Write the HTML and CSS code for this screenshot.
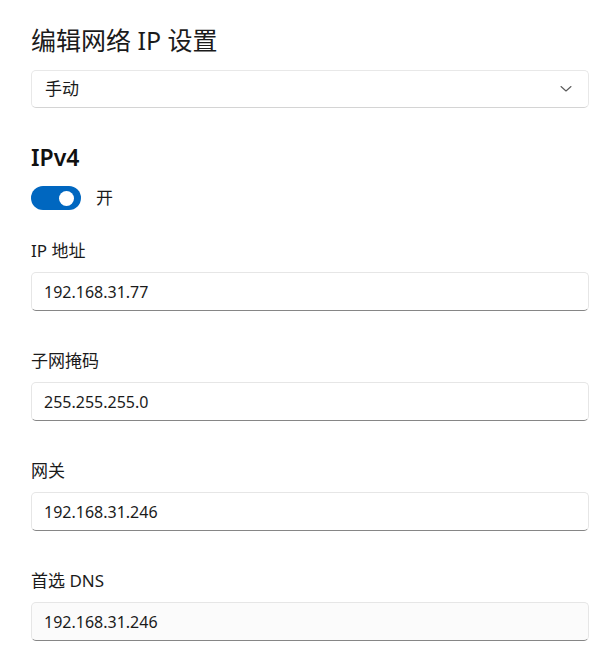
FILE: index.html
```html
<!DOCTYPE html>
<html lang="zh-CN">
<head>
<meta charset="utf-8">
<title>编辑网络 IP 设置</title>
<link rel="stylesheet" href="styles.css">
</head>
<body>
<div class="page">
  <h1 class="title">编辑网络 IP 设置</h1>
  <div class="select">
    <span class="select-text">手动</span>
    <svg class="chevron" width="12" height="8" viewBox="0 0 12 8"><path d="M1 1.5 L6 6 L11 1.5" fill="none" stroke="#5a5a5a" stroke-width="1.1" stroke-linecap="round" stroke-linejoin="round"/></svg>
  </div>

  <h2 class="section">IPv4</h2>
  <div class="toggle-row">
    <span class="toggle"><span class="knob"></span></span>
    <span class="toggle-label">开</span>
  </div>

  <div class="field">
    <div class="label">IP 地址</div>
    <div class="input">192.168.31.77</div>
  </div>
  <div class="field">
    <div class="label">子网掩码</div>
    <div class="input">255.255.255.0</div>
  </div>
  <div class="field">
    <div class="label">网关</div>
    <div class="input">192.168.31.246</div>
  </div>
  <div class="field">
    <div class="label">首选 DNS</div>
    <div class="input input-muted">192.168.31.246</div>
  </div>
</div>
</body>
</html>
```

FILE: styles.css
```css
html, body {
  margin: 0;
  padding: 0;
  background: #ffffff;
}

body {
  font-family: "Noto Sans", "Noto Sans CJK SC", sans-serif;
  color: #1b1b1b;
}

.page {
  padding: 24px 23px 0 31px;
  display: flex;
  flex-direction: column;
}

.title {
  margin: 0;
  font-size: 25px;
  font-weight: 400;
  line-height: 32px;
  color: #1b1b1b;
}

.select {
  margin-top: 14px;
  height: 38px;
  box-sizing: border-box;
  border: 1px solid #e8e8e8;
  border-bottom-color: #d4d4d4;
  border-radius: 5px;
  background: #ffffff;
  display: flex;
  align-items: center;
  justify-content: space-between;
  padding: 0 16px 0 13px;
}

.select-text {
  font-size: 17px;
  line-height: 22px;
  color: #1b1b1b;
}

.chevron {
  display: block;
}

.section {
  margin: 33px 0 0;
  font-size: 23px;
  font-weight: 600;
  line-height: 32px;
  color: #111111;
}

.toggle-row {
  margin-top: 13px;
  display: flex;
  align-items: center;
  gap: 15px;
}

.toggle {
  width: 50px;
  height: 24px;
  border-radius: 12px;
  background: #0067c0;
  display: flex;
  align-items: center;
  justify-content: flex-end;
  padding-right: 7px;
  box-sizing: border-box;
}

.knob {
  width: 15px;
  height: 15px;
  border-radius: 50%;
  background: #ffffff;
}

.toggle-label {
  font-size: 17px;
  line-height: 22px;
  color: #1b1b1b;
}

.field {
  display: flex;
  flex-direction: column;
  margin-top: 30px;
}

.field + .field {
  margin-top: 39px;
}

.label {
  font-size: 17px;
  line-height: 22px;
  color: #1b1b1b;
}

.input {
  margin-top: 10px;
  height: 39px;
  box-sizing: border-box;
  border: 1px solid #e6e6e6;
  border-bottom: 1px solid #868686;
  border-radius: 5px;
  background: #ffffff;
  padding: 0 12px;
  display: flex;
  align-items: center;
  font-size: 16px;
  color: #1b1b1b;
}

.input-muted {
  background: #fbfbfb;
}
```
